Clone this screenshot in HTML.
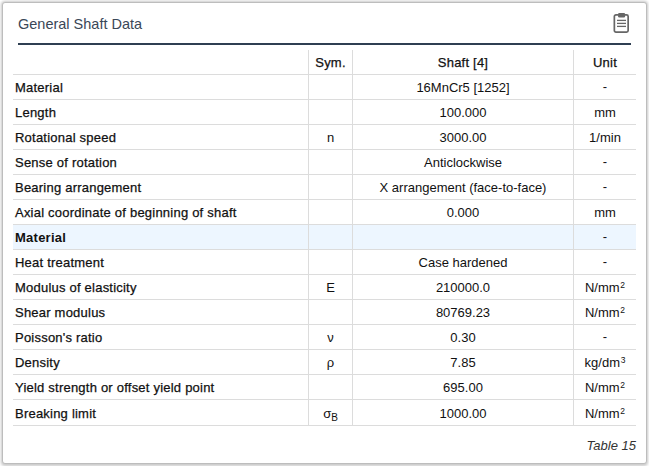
<!DOCTYPE html>
<html><head><meta charset="utf-8">
<style>
html,body{margin:0;padding:0;background:#fff;width:649px;height:466px;overflow:hidden;}
body{font-family:"Liberation Sans",sans-serif;position:relative;}
.panel{position:absolute;left:2px;top:2px;width:643px;height:460px;border:1px solid #bdbdbd;border-radius:3px;box-shadow:0 0.5px 3px 1px rgba(0,0,0,0.22);background:#fff;}
.title{position:absolute;left:18px;top:14px;font-size:14.5px;line-height:20px;color:#3a4757;white-space:nowrap;}
.uline{position:absolute;left:18px;top:43px;width:613px;height:2px;background:#2f3f52;}
.icon{position:absolute;left:612px;top:12px;width:20px;height:22px;}
.r{position:absolute;left:13px;width:623px;height:24px;border-bottom:1px solid #dcdcdc;font-size:13px;line-height:24px;color:#111;}
.r.sec{background:#edf6ff;}
.c{position:absolute;top:1px;height:100%;white-space:nowrap;}
.c1{left:0;width:295px;padding-left:2px;box-sizing:border-box;}
.c2{left:296px;width:43px;text-align:center;}
.c3{left:340px;width:220px;text-align:center;}
.c4{left:561px;width:62px;text-align:center;}
.lab{-webkit-text-stroke:0.25px #111;letter-spacing:0.22px;}
.b{font-weight:bold;letter-spacing:0.25px;}
.hy{position:relative;top:-1.5px;}
.vl{position:absolute;top:50px;width:1px;height:375px;background:#dcdcdc;}
.cap{position:absolute;right:13px;top:438px;font-size:13px;line-height:16px;font-style:italic;color:#333;white-space:nowrap;}
sup{font-size:8.5px;line-height:0;vertical-align:0;position:relative;top:-4.3px;margin-left:0.7px;}
sub{font-size:10px;line-height:0;vertical-align:0;position:relative;top:3px;}
</style></head><body>
<div class="panel"></div>
<div class="title">General Shaft Data</div>
<svg class="icon" viewBox="0 0 20 22">
 <rect x="2.35" y="2.85" width="13.8" height="17.3" rx="1.6" fill="none" stroke="#666" stroke-width="1.7"/>
 <rect x="6.1" y="0.9" width="7" height="4.5" rx="1.2" fill="#666"/>
 <line x1="5" y1="8.4" x2="14" y2="8.4" stroke="#666" stroke-width="1.3"/>
 <line x1="5" y1="11.4" x2="14" y2="11.4" stroke="#666" stroke-width="1.3"/>
 <line x1="5" y1="14.4" x2="14" y2="14.4" stroke="#666" stroke-width="1.3"/>
</svg>
<div class="uline"></div>

<div class="r" style="top:50px"><div class="c c1"></div><div class="c c2 lab">Sym.</div><div class="c c3 lab">Shaft [4]</div><div class="c c4 lab">Unit</div></div>
<div class="r" style="top:75px"><div class="c c1 lab">Material</div><div class="c c2"></div><div class="c c3">16MnCr5 [1252]</div><div class="c c4"><span class="hy">-</span></div></div>
<div class="r" style="top:100px"><div class="c c1 lab">Length</div><div class="c c2"></div><div class="c c3">100.000</div><div class="c c4">mm</div></div>
<div class="r" style="top:125px"><div class="c c1 lab">Rotational speed</div><div class="c c2">n</div><div class="c c3">3000.00</div><div class="c c4">1/min</div></div>
<div class="r" style="top:150px"><div class="c c1 lab">Sense of rotation</div><div class="c c2"></div><div class="c c3">Anticlockwise</div><div class="c c4"><span class="hy">-</span></div></div>
<div class="r" style="top:175px"><div class="c c1 lab">Bearing arrangement</div><div class="c c2"></div><div class="c c3">X arrangement (face-to-face)</div><div class="c c4"><span class="hy">-</span></div></div>
<div class="r" style="top:200px"><div class="c c1 lab">Axial coordinate of beginning of shaft</div><div class="c c2"></div><div class="c c3">0.000</div><div class="c c4">mm</div></div>
<div class="r sec" style="top:225px"><div class="c c1 b">Material</div><div class="c c2"></div><div class="c c3"></div><div class="c c4"><span class="hy">-</span></div></div>
<div class="r" style="top:250px"><div class="c c1 lab">Heat treatment</div><div class="c c2"></div><div class="c c3">Case hardened</div><div class="c c4"><span class="hy">-</span></div></div>
<div class="r" style="top:275px"><div class="c c1 lab">Modulus of elasticity</div><div class="c c2">E</div><div class="c c3">210000.0</div><div class="c c4">N/mm<sup>2</sup></div></div>
<div class="r" style="top:300px"><div class="c c1 lab">Shear modulus</div><div class="c c2"></div><div class="c c3">80769.23</div><div class="c c4">N/mm<sup>2</sup></div></div>
<div class="r" style="top:325px"><div class="c c1 lab">Poisson's ratio</div><div class="c c2">&nu;</div><div class="c c3">0.30</div><div class="c c4"><span class="hy">-</span></div></div>
<div class="r" style="top:350px"><div class="c c1 lab">Density</div><div class="c c2">&rho;</div><div class="c c3">7.85</div><div class="c c4">kg/dm<sup>3</sup></div></div>
<div class="r" style="top:375px"><div class="c c1 lab">Yield strength or offset yield point</div><div class="c c2"></div><div class="c c3">695.00</div><div class="c c4">N/mm<sup>2</sup></div></div>
<div class="r" style="top:400px;height:25px;line-height:25px"><div class="c c1 lab">Breaking limit</div><div class="c c2">&sigma;<sub>B</sub></div><div class="c c3">1000.00</div><div class="c c4">N/mm<sup>2</sup></div></div>

<div class="vl" style="left:308px"></div>
<div class="vl" style="left:352px"></div>
<div class="vl" style="left:573px"></div>

<div class="cap">Table 15</div>
</body></html>
